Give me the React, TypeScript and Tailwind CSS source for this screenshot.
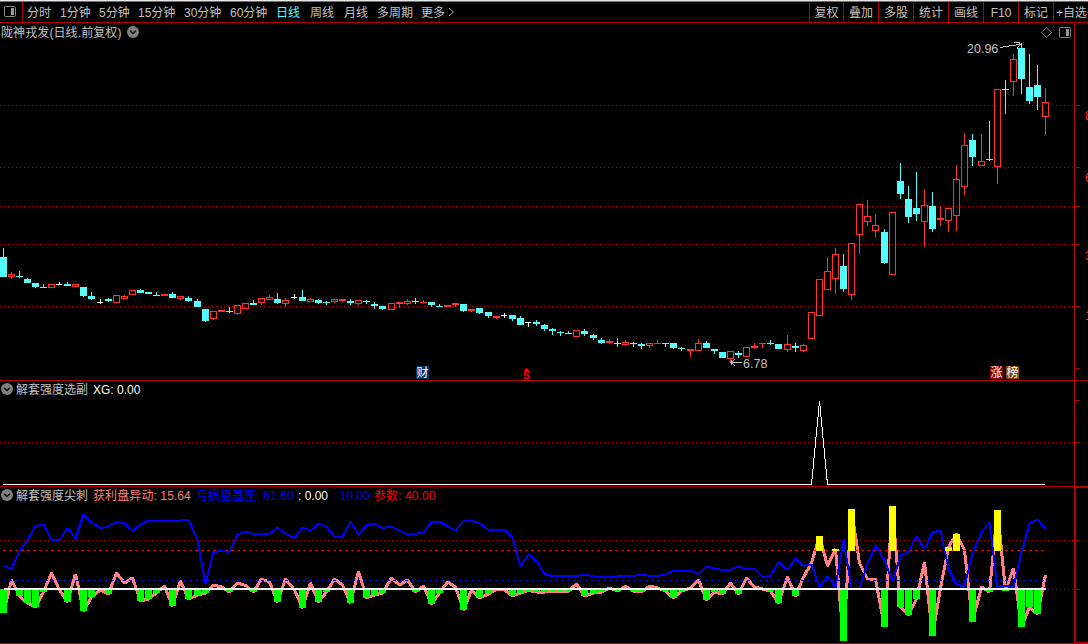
import { ReactNode } from "react";

type Candle = [kind: "r" | "c" | "w", high: number, top: number, bottom: number, low: number];

// one entry per trading day, y values in chart pixels
const CANDLES: Candle[] = [
  ["c", 248, 257, 277, 277], ["r", 272, 274, 277, 279], ["c", 271, 276, 277, 278], ["c", 278, 279, 283, 283],
  ["c", 283, 283, 287, 288], ["c", 284, 287, 288, 288], ["r", 284, 284, 288, 288], ["w", 282, 284, 285, 285],
  ["c", 282, 284, 286, 286], ["r", 284, 284, 287, 287], ["c", 287, 287, 296, 297], ["c", 292, 296, 299, 300],
  ["w", 299, 302, 303, 304], ["c", 298, 299, 301, 302], ["r", 295, 295, 303, 303], ["r", 295, 296, 299, 299],
  ["r", 290, 290, 295, 295], ["c", 289, 290, 293, 293], ["c", 292, 292, 294, 294], ["c", 292, 295, 296, 296],
  ["r", 294, 294, 296, 296], ["c", 292, 294, 298, 298], ["r", 296, 296, 299, 300], ["c", 296, 298, 301, 302],
  ["c", 299, 301, 307, 307], ["c", 309, 309, 321, 322], ["r", 311, 311, 319, 320], ["r", 310, 310, 312, 312],
  ["c", 307, 311, 312, 313], ["r", 305, 305, 314, 315], ["r", 303, 303, 309, 309], ["c", 300, 303, 305, 305],
  ["r", 298, 298, 303, 305], ["r", 295, 297, 300, 300], ["c", 293, 299, 303, 304], ["r", 298, 300, 304, 307],
  ["w", 294, 297, 298, 299], ["c", 290, 297, 301, 301], ["r", 298, 299, 302, 302], ["c", 299, 300, 303, 304],
  ["c", 301, 302, 303, 305], ["r", 299, 299, 302, 303], ["r", 299, 299, 301, 302], ["c", 299, 301, 303, 305],
  ["r", 300, 300, 304, 305], ["c", 300, 301, 302, 304], ["c", 302, 304, 306, 309], ["c", 306, 306, 309, 310],
  ["r", 303, 303, 310, 310], ["r", 302, 302, 304, 308], ["r", 299, 301, 304, 305], ["c", 298, 301, 302, 304],
  ["r", 300, 302, 303, 303], ["c", 302, 302, 305, 307], ["c", 304, 306, 307, 307], ["r", 305, 305, 307, 307],
  ["r", 303, 303, 305, 307], ["c", 304, 304, 311, 312], ["r", 309, 309, 311, 312], ["c", 308, 308, 313, 314],
  ["c", 312, 312, 316, 318], ["r", 316, 316, 318, 319], ["w", 313, 315, 316, 318], ["c", 315, 315, 319, 321],
  ["c", 316, 318, 325, 325], ["w", 322, 322, 323, 327], ["c", 320, 322, 324, 326], ["c", 324, 325, 329, 331],
  ["c", 328, 329, 331, 335], ["c", 331, 332, 333, 336], ["c", 331, 333, 334, 334], ["r", 330, 330, 337, 337],
  ["c", 329, 331, 334, 336], ["c", 334, 335, 338, 340], ["c", 338, 340, 343, 344], ["r", 339, 341, 343, 344],
  ["c", 338, 343, 344, 347], ["r", 340, 342, 345, 346], ["c", 342, 343, 344, 347], ["c", 343, 344, 346, 349],
  ["r", 343, 343, 346, 348], ["r", 340, 343, 344, 344], ["c", 343, 343, 344, 347], ["c", 343, 343, 348, 349],
  ["c", 347, 348, 349, 351], ["r", 349, 349, 351, 357], ["r", 339, 343, 351, 351], ["c", 341, 343, 348, 348],
  ["c", 349, 349, 351, 354], ["c", 352, 352, 358, 358], ["r", 351, 351, 359, 362], ["c", 351, 353, 355, 358],
  ["r", 347, 347, 357, 357], ["r", 343, 346, 348, 349], ["r", 343, 343, 344, 348], ["c", 340, 343, 344, 345],
  ["c", 344, 344, 349, 349], ["r", 335, 344, 350, 352], ["c", 343, 346, 348, 352], ["r", 344, 345, 351, 352],
  ["r", 312, 312, 339, 339], ["r", 279, 279, 316, 316], ["r", 257, 271, 290, 290], ["r", 248, 254, 279, 294],
  ["c", 254, 266, 289, 292], ["r", 243, 243, 295, 300], ["r", 204, 204, 235, 254], ["r", 200, 216, 222, 226],
  ["r", 214, 225, 231, 237], ["c", 229, 232, 263, 264], ["r", 212, 212, 275, 275], ["c", 163, 181, 194, 199],
  ["c", 186, 199, 217, 223], ["c", 172, 208, 214, 221], ["r", 189, 205, 222, 247], ["c", 192, 206, 229, 232],
  ["r", 206, 218, 220, 226], ["r", 208, 208, 221, 232], ["r", 165, 179, 216, 231], ["r", 133, 145, 187, 195],
  ["c", 134, 140, 157, 166], ["r", 134, 161, 166, 166], ["c", 121, 159, 160, 161], ["r", 89, 89, 167, 184],
  ["c", 80, 89, 90, 114], ["r", 54, 59, 82, 96], ["c", 43, 48, 79, 94], ["c", 54, 87, 101, 104],
  ["c", 65, 85, 97, 110], ["r", 88, 102, 117, 135],
];

const BASE_LINE = [
  566, 569, 551.5, 540, 526, 524.5, 540, 540, 528, 538.5, 514.5, 522.5, 528, 526.5, 521.5, 523.5, 531, 524.5, 520.5, 520.5,
  520.5, 520.5, 520.5, 520, 540, 584, 552, 551, 552, 534.5, 531.5, 534, 534, 534, 528, 533.5, 538, 527.5, 531, 523.5,
  526.5, 536.5, 536.5, 521.5, 535, 525, 523.5, 528, 526.5, 531, 534, 534, 532.5, 522, 522, 526, 530.5, 521, 521, 523,
  530, 530, 530, 537, 567, 554, 561, 574, 576, 576, 576, 576, 574.5, 576.5, 576.5, 576.5, 576.5, 576, 576, 574.5,
  576, 576, 574.5, 570.5, 570.5, 570.5, 574, 566.5, 568.5, 570, 570, 566.5, 569, 569, 577, 576, 562, 570, 558.5, 566,
  564.5, 587, 576.5, 587, 540, 588, 588.5, 563.5, 545.5, 560, 582, 555.5, 552, 536.5, 549, 532.5, 530.5, 568.5, 584.5, 586.5,
  553.5, 532.5, 522.5, 587, 585.5, 587, 552, 523.5, 519.5, 529,
];

const PROFIT_LINE = [
  613, 580, 596, 603, 607, 592, 573, 590, 602, 574, 611, 597, 590, 594, 573, 583, 578, 601, 599, 593,
  586, 606, 581, 599, 595, 593, 585, 587, 592, 583, 585.5, 592, 579, 582, 602, 579, 590, 608, 583, 602,
  592, 579, 585, 603, 571, 598, 595, 593, 578, 585, 580, 592, 586, 604, 593, 582, 587, 610, 590, 598,
  594, 589.5, 590, 596, 593, 590.5, 592, 592, 591, 591, 591, 584, 596, 593, 592, 588, 591, 586.5, 591, 592,
  586, 588, 591, 598, 591, 588, 580, 600, 592, 594, 583, 594, 578, 587, 589, 591, 603, 577, 596, 577,
  563, 536, 566, 549, 641, 509, 563, 579, 579, 627, 506, 607, 615, 599, 562, 636, 588, 547, 534, 550,
  622, 587, 592, 510, 591, 568, 627, 607, 614, 575,
];

const COLORS = { r: "#ff3232", c: "#54fcfc", w: "#ffffff" };
const GRID = "#b00000";
const LEVEL = 551;
const ZERO = 589;

const xAt = (i: number) => Math.floor(3.08 + i * 8.082);
const toPoints = (ys: number[]) => ys.map((y, i) => `${xAt(i) + 0.5},${y}`).join(" ");

const PERIODS: [string, string][] = [
  ["分时", "w-[33px]"],
  ["1分钟", "w-[39px]"],
  ["5分钟", "w-[39px]"],
  ["15分钟", "w-[46px]"],
  ["30分钟", "w-[46px]"],
  ["60分钟", "w-[46px]"],
  ["日线", "w-[34px]"],
  ["周线", "w-[34px]"],
  ["月线", "w-[33px]"],
  ["多周期", "w-[44px]"],
  ["更多", "w-[27px]"],
];

const TOOLS: [string, string][] = [
  ["复权", "w-[34px]"],
  ["叠加", "w-[35px]"],
  ["多股", "w-[35px]"],
  ["统计", "w-[35px]"],
  ["画线", "w-[35px]"],
  ["F10", "w-[35px]"],
  ["标记", "w-[35px]"],
];

function Label({ children, className = "" }: { children: ReactNode; className?: string }) {
  return <span className={`shrink-0 whitespace-pre pt-0.5 ${className}`}>{children}</span>;
}

function PanelIcon() {
  return (
    <svg width="13" height="12" className="shrink-0" fill="none">
      <rect x="0.5" y="0.5" width="11" height="10" rx="1" stroke="#888" />
      <rect x="7" y="2" width="3" height="7" fill="#999" />
    </svg>
  );
}

function Chevron() {
  return (
    <svg width="12" height="12" className="shrink-0" fill="none">
      <circle cx="6" cy="6" r="6" fill="#808080" />
      <path d="M3 4.7 6 7.5 9 4.7" stroke="#111" strokeWidth="1.5" />
    </svg>
  );
}

function Dotted({ y, from = 0 }: { y: number; from?: number }) {
  return <line x1={from} x2="1074" y1={y + 0.5} y2={y + 0.5} stroke={GRID} strokeDasharray="1 3" />;
}

type AxisProps = { top: number; bottom: number; ticks: number[]; short?: number[]; width?: number };

function Axis({ top, bottom, ticks, short = [], width = 1 }: AxisProps) {
  return (
    <g fill={GRID}>
      <rect x="1074" y={top} width={width} height={bottom - top} />
      {ticks.map((y) => (
        <rect key={y} x="1075" y={y} width="5" height="1" />
      ))}
      {short.map((y) => (
        <rect key={y} x="1075" y={y} width="2" height="1" />
      ))}
    </g>
  );
}

function CandleBar({ candle, x }: { candle: Candle; x: number }) {
  const [kind, high, top, bottom, low] = candle;
  const color = COLORS[kind];
  const hollow = kind === "r" && bottom - top > 2;
  return (
    <g fill={color}>
      {top > high && <rect x={x} y={high} width="1" height={top - high} />}
      {low > bottom && <rect x={x} y={bottom} width="1" height={low - bottom} />}
      {hollow ? (
        <rect x={x - 2.5} y={top + 0.5} width="6" height={bottom - top - 1} fill="none" stroke={color} />
      ) : (
        <rect x={x - 3} y={top} width={kind === "w" ? 6 : 7} height={bottom - top} />
      )}
    </g>
  );
}

function Badge({ children, className }: { children: ReactNode; className: string }) {
  return (
    <span className={`absolute top-[343px] h-[13px] w-[13px] text-center text-[12px] leading-[14px] text-white ${className}`}>
      {children}
    </span>
  );
}

function PricePanel() {
  return (
    <section className="relative h-[358px] shrink-0 border-b border-[#b00000]">
      <svg viewBox="0 23 1088 357" className="block h-[357px] w-[1088px]" shapeRendering="crispEdges">
        {[105, 167, 206, 244, 306].map((y) => (
          <Dotted key={y} y={y} />
        ))}
        <Axis top={23} bottom={380} ticks={[105, 167, 206, 244, 306, 368]} />
        {CANDLES.map((candle, i) => (
          <CandleBar key={i} candle={candle} x={xAt(i)} />
        ))}
        <g fill="none" stroke="#c0c0c0">
          <path d="M1000 47.5 1019 44.5M1014 42.5h5l1 2-3 4" />
          <path d="M731 362.5h11M735 359l-4 3.5 4 3.5M731 360v5" />
          <path d="M1046.5 27.5 1051.5 32.5 1046.5 37.5 1041.5 32.5Z" stroke="#707070" />
        </g>
        <g fill="#ff0000">
          <rect x="526" y="368" width="1" height="1" />
          <rect x="525" y="369" width="3" height="1" />
          <rect x="524" y="370" width="5" height="1" />
        </g>
      </svg>
      <div className="absolute left-0 top-0 flex h-[18px] items-center text-[#c0c0c0]">
        <Label className="w-[127px] pl-px tracking-[0.1px]">陇神戎发(日线.前复权)</Label>
        <Chevron />
      </div>
      <div className="absolute left-[1059px] top-1">
        <PanelIcon />
      </div>
      <span className="absolute left-[967px] top-[18px] text-[12.5px] leading-4 text-[#c0c0c0]">20.96</span>
      <span className="absolute left-[743px] top-[333px] text-[12.5px] leading-4 text-[#c0c0c0]">6.78</span>
      <Badge className="left-[416px] bg-[#003468]">财</Badge>
      <Badge className="left-[990px] bg-[#800000]">涨</Badge>
      <Badge className="left-[1006px] bg-[#884400]">榜</Badge>
      <span className="absolute left-[523px] top-[347px] text-[10px] font-bold leading-[11px] text-[#ff0000]">S</span>
      <div className="absolute left-[1085px] top-0 h-full w-[3px] overflow-hidden text-[12px] leading-3 text-[#ff3232]">
        <span className="absolute top-[87px]">8</span>
        <span className="absolute top-[149px]">6</span>
        <span className="absolute top-[227px]">3</span>
        <span className="absolute top-[287px]">1</span>
      </div>
    </section>
  );
}

function PickPanel() {
  return (
    <section className="relative h-[106px] shrink-0 border-b border-[#b00000]">
      <svg viewBox="0 381 1088 105" className="block h-[105px] w-[1088px]" shapeRendering="crispEdges">
        <Dotted y={442} />
        <Axis top={381} bottom={486} ticks={[400, 442]} short={[421]} />
        <polyline points="3,484.5 811.5,484.5 819.5,401 827.5,484.5 1045,484.5" fill="none" stroke="#fff" />
      </svg>
      <div className="absolute left-0 top-0 flex h-4 items-center pl-px">
        <Chevron />
        <Label className="w-[77px] pl-[3px] text-[#c0c0c0]">解套强度选副</Label>
        <Label className="pl-[3px] text-white">XG: 0.00</Label>
      </div>
    </section>
  );
}

function SpikePanel() {
  return (
    <section className="relative h-[157px] shrink-0">
      <svg viewBox="0 487 1088 157" className="block h-[157px] w-[1088px]" shapeRendering="crispEdges">
        <Dotted y={540} />
        <Dotted y={589} from={1048} />
        <Axis top={487} bottom={644} ticks={[540, 589]} short={[565]} width={2} />
        <g fill={GRID}>
          <rect x="1074" y="487" width="14" height="1" />
          <rect y="643" width="1088" height="1" />
          <rect x="1074" y="642" width="14" height="2" />
        </g>
        <polyline
          points={toPoints(PROFIT_LINE)}
          fill="none"
          stroke="#ff8080"
          strokeWidth="3"
          strokeLinejoin="bevel"
        />
        <g fill="none" strokeDasharray="3 3">
          <line x1="3" x2="1045" y1="550.5" y2="550.5" stroke="#ff0000" />
          <line x1="3" x2="1045" y1="580.5" y2="580.5" stroke="#0000ff" />
        </g>
        <polyline points={toPoints(BASE_LINE)} fill="none" stroke="#0000ff" strokeWidth="2" strokeLinejoin="bevel" />
        {PROFIT_LINE.map((y, i) => {
          if (y > ZERO + 1) return <rect key={i} x={xAt(i) - 3} y={ZERO} width="7" height={y - ZERO} fill="#00ff00" />;
          if (y < LEVEL - 1) return <rect key={i} x={xAt(i) - 3} y={y} width="7" height={LEVEL - y} fill="#ffff00" />;
          return null;
        })}
        <rect x="4" y="588" width="1042" height="2" fill="#fff" />
      </svg>
      <div className="absolute left-0 top-0 flex h-4 items-center pl-px">
        <Chevron />
        <Label className="w-[77px] pl-[3px] text-[#c0c0c0]">解套强度尖刺</Label>
        <Label className="w-[106px] pl-[3px] tracking-[0.1px] text-[#ff8080]">获利盘异动: 15.64</Label>
        <Label className="w-[102px] tracking-[0.1px] text-[#0000ff]">亏损盘基座: 61.60</Label>
        <Label className="w-[35px] text-white">: 0.00</Label>
        <Label className="w-[41px] text-[#0000ff]">: 10.00</Label>
        <Label className="tracking-[0.1px] text-[#ff0000]">参数: 40.00</Label>
      </div>
    </section>
  );
}

export default function App() {
  return (
    <main className="flex h-[644px] w-[1088px] flex-col overflow-hidden bg-black font-['Liberation_Sans','Noto_Sans_CJK_SC',sans-serif] text-[12px] leading-4">
      <div className="h-px shrink-0 bg-[#e8e8e8]" />
      <header className="flex h-[22px] shrink-0 border-b border-t border-b-[#b00000] border-t-[#687070] text-[#c0c0c0]">
        <div className="flex w-[23px] items-center border-r border-[#b00000] pl-1">
          <PanelIcon />
        </div>
        <nav className="flex items-center pl-1">
          {PERIODS.map(([name, width]) => (
            <Label key={name} className={`${width} ${name === "日线" ? "text-[#54fcfc]" : ""}`}>
              {name}
            </Label>
          ))}
          <svg width="7" height="10" fill="none">
            <path d="M1 1 5.5 5 1 9" stroke="#c0c0c0" />
          </svg>
        </nav>
        <div className="ml-auto flex border-l border-[#b00000]">
          {TOOLS.map(([name, width]) => (
            <span key={name} className={`flex items-center justify-center border-r border-[#b00000] pt-0.5 ${width}`}>
              {name}
            </span>
          ))}
          <span className="flex w-[34px] items-center overflow-hidden whitespace-nowrap pl-0.5 pt-0.5">+自选</span>
        </div>
      </header>
      <PricePanel />
      <PickPanel />
      <SpikePanel />
    </main>
  );
}
